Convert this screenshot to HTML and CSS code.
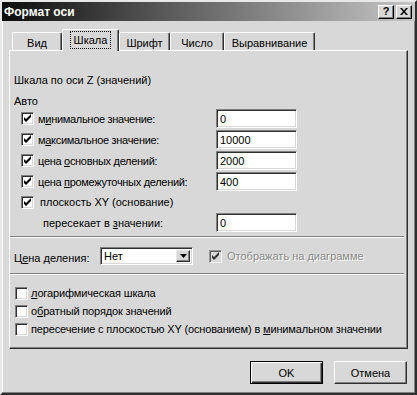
FILE: index.html
```html
<!DOCTYPE html>
<html lang="ru">
<head>
    <meta charset="UTF-8">
    <title>Формат оси</title>
    <link rel="stylesheet" href="styles.css">
</head>
<body>
    <div class="window">
        <!-- Title bar -->
        <div class="titlebar">
            <span class="title">Формат оси</span>
            <div class="caption-btns">
                <div class="cap-btn">?</div>
                <div class="cap-btn">
                    <svg width="8" height="7" viewBox="0 0 8 7"><path d="M0 0h2l2 2.5 2-2.5h2l-3 3.5 3 3.5h-2l-2-2.5-2 2.5h-2l3-3.5z" fill="#000"/></svg>
                </div>
            </div>
        </div>

        <!-- Tabs -->
        <div class="tabs">
            <div class="tab tab-vid">Вид</div>
            <div class="tab tab-scale active"><span class="focus">Шкала</span></div>
            <div class="tab tab-font">Шрифт</div>
            <div class="tab tab-num">Число</div>
            <div class="tab tab-align">Выравнивание</div>
        </div>

        <div class="panel">
            <div class="scale-title">Шкала по оси Z (значений)</div>
            <div class="auto-label">Авто</div>

            <div class="auto-rows">
                <div class="row">
                    <div class="check-label"><span class="cb checked"></span><span>м<u>и</u>нимальное значение:</span></div>
                    <div class="field">0</div>
                </div>
                <div class="row">
                    <div class="check-label"><span class="cb checked"></span><span>м<u>а</u>ксимальное значение:</span></div>
                    <div class="field">10000</div>
                </div>
                <div class="row">
                    <div class="check-label"><span class="cb checked"></span><span>цена <u>о</u>сновных делений:</span></div>
                    <div class="field">2000</div>
                </div>
                <div class="row">
                    <div class="check-label"><span class="cb checked"></span><span>цена <u>п</u>ромежуточных делений:</span></div>
                    <div class="field">400</div>
                </div>
                <div class="row row-plane">
                    <div class="check-label wide-gap"><span class="cb checked"></span><span>плоскость XY (основание)</span></div>
                </div>
                <div class="row">
                    <div class="cross-label">пересекает в <u>з</u>начении:</div>
                    <div class="field">0</div>
                </div>
            </div>

            <div class="sep"></div>

            <div class="units-row">
                <div class="units-label">Ц<u>е</u>на деления:</div>
                <div class="combo">
                    <span class="combo-text">Нет</span>
                    <span class="combo-btn">
                        <svg width="7" height="4" viewBox="0 0 7 4"><path d="M0 0h7l-3.5 4z" fill="#000"/></svg>
                    </span>
                </div>
                <div class="check-label disabled"><span class="cb checked"></span><span>Отображать на диаграмме</span></div>
            </div>

            <div class="sep"></div>

            <div class="options">
                <div class="check-label"><span class="cb"></span><span><u>л</u>огарифмическая шкала</span></div>
                <div class="check-label"><span class="cb"></span><span>о<u>б</u>ратный порядок значений</span></div>
                <div class="check-label"><span class="cb"></span><span>пересечение с плоскостью XY (основанием) в <u>м</u>инимальном значении</span></div>
            </div>
        </div>

        <div class="footer">
            <div class="btn btn-default">OK</div>
            <div class="btn">Отмена</div>
        </div>
    </div>
</body>
</html>
```

FILE: styles.css
```css
body {
    margin: 0;
    font-family: 'Liberation Sans', Arial, sans-serif;
    font-size: 11px;
    color: #000;
    background: #d8d8d8;
}

.window {
    width: 417px;
    height: 395px;
    box-sizing: border-box;
    background: #d8d8d8;
    border: 2px solid;
    border-color: #e8e8e8 #303030 #303030 #e8e8e8;
    box-shadow: inset -1px -1px #808080, inset 1px 1px #fff;
}

/* Title bar */
.titlebar {
    height: 19px;
    display: flex;
    align-items: center;
    justify-content: space-between;
    padding: 0 3px 0 2px;
    background: linear-gradient(to right, #0c0c0c, #5a5a5a 40%, #c6c6c6);
}

.title {
    color: #fff;
    font-weight: bold;
    font-size: 12px;
}

.caption-btns {
    display: flex;
    gap: 2px;
}

.cap-btn {
    width: 16px;
    height: 14px;
    box-sizing: border-box;
    display: flex;
    align-items: center;
    justify-content: center;
    background: #d8d8d8;
    border: 1px solid;
    border-color: #fff #000 #000 #fff;
    box-shadow: inset -1px -1px #808080;
    font-weight: bold;
    font-size: 11px;
    line-height: 1;
}

/* Tabs */
.tabs {
    display: flex;
    align-items: flex-end;
    height: 22px;
    margin: 8px 0 -1px 10px;
    position: relative;
    z-index: 1;
}

.tab {
    height: 18px;
    margin-bottom: 1px;
    box-sizing: border-box;
    display: flex;
    align-items: center;
    justify-content: center;
    padding-top: 2px;
    background: #d8d8d8;
    border: 1px solid;
    border-bottom: none;
    border-color: #fff #303030 transparent #fff;
    border-radius: 2px 2px 0 0;
    box-shadow: inset -1px 0 #808080;
}

.tab-vid { width: 50px; }
.tab-scale { width: 57px; }
.tab-font { width: 51px; }
.tab-num { width: 54px; }
.tab-align { width: 91px; }

.tab.active {
    height: 22px;
    margin-bottom: 0;
    padding-top: 0;
    padding-bottom: 2px;
}

.focus {
    outline: 1px dotted #000;
    outline-offset: 1px;
    padding: 1px 2px;
}

/* Panel */
.panel {
    height: 299px;
    margin: 0 7px;
    box-sizing: border-box;
    border: 1px solid;
    border-color: #fff #303030 #303030 #fff;
    box-shadow: inset -1px -1px #808080;
}

.scale-title {
    margin: 22px 0 0 4px;
    line-height: 14px;
}

.auto-label {
    margin: 8px 0 0 4px;
    line-height: 13px;
}

.auto-rows {
    padding-left: 11px;
    letter-spacing: -0.3px;
}

.row {
    display: flex;
    align-items: center;
    height: 21px;
}

.row-plane {
    height: 20px;
}

.row .check-label {
    width: 195px;
}

.check-label {
    display: flex;
    align-items: center;
    gap: 4px;
    white-space: nowrap;
}

.check-label.wide-gap {
    gap: 6px;
    letter-spacing: 0;
}

.cross-label {
    width: 173px;
    padding-left: 22px;
    letter-spacing: 0;
}

.cb {
    width: 13px;
    height: 13px;
    box-sizing: border-box;
    flex: none;
    background: #fff;
    border: 1px solid;
    border-color: #808080 #fff #fff #808080;
    box-shadow: inset 1px 1px #303030, inset -1px -1px #d8d8d8;
}

.cb.checked {
    background: #fff url("data:image/svg+xml,%3Csvg xmlns='http://www.w3.org/2000/svg' width='11' height='11'%3E%3Cpath d='M2 4v3l2 2 5-5V1L4 6z' fill='%23000'/%3E%3C/svg%3E") center / 11px 11px no-repeat;
}

.field {
    width: 81px;
    height: 19px;
    box-sizing: border-box;
    background: #fff;
    border: 1px solid;
    border-color: #808080 #fff #fff #808080;
    box-shadow: inset 1px 1px #303030, inset -1px -1px #d8d8d8;
    padding: 3px 0 0 3px;
    line-height: 13px;
    letter-spacing: 0;
}

.sep {
    height: 0;
    margin: 3px 3px 0 0;
    border-top: 1px solid #808080;
    border-bottom: 1px solid #fff;
}

/* Units row */
.units-row {
    display: flex;
    align-items: center;
    padding: 9px 0 5px 4px;
}

.units-label {
    width: 86px;
    padding-top: 4px;
}

.combo {
    width: 93px;
    height: 18px;
    box-sizing: border-box;
    display: flex;
    align-items: center;
    justify-content: space-between;
    background: #fff;
    border: 1px solid;
    border-color: #808080 #fff #fff #808080;
    box-shadow: inset 1px 1px #303030, inset -1px -1px #d8d8d8;
    padding: 2px 2px 2px 3px;
}

.combo-btn {
    width: 14px;
    height: 12px;
    box-sizing: border-box;
    display: flex;
    align-items: center;
    justify-content: center;
    background: #d8d8d8;
    border: 1px solid;
    border-color: #e8e8e8 #303030 #303030 #e8e8e8;
    box-shadow: inset -1px -1px #808080;
}

.units-row .check-label {
    margin-left: 16px;
    gap: 5px;
}

.check-label.disabled {
    color: #8a8a8a;
    text-shadow: 1px 1px #fff;
}

.check-label.disabled .cb {
    background-color: #d8d8d8;
    opacity: 0.75;
}

/* Bottom options */
.options {
    margin-top: 9px;
    padding-left: 5px;
    letter-spacing: -0.15px;
}

.options .check-label {
    height: 18px;
    gap: 3px;
}

/* Footer buttons */
.footer {
    display: flex;
    justify-content: flex-end;
    gap: 11px;
    margin: 12px 8px 0 0;
}

.btn {
    width: 73px;
    height: 23px;
    box-sizing: border-box;
    display: flex;
    align-items: center;
    justify-content: center;
    background: #d8d8d8;
    border: 1px solid;
    border-color: #fff #303030 #303030 #fff;
    box-shadow: inset -1px -1px #808080;
}

.btn-default {
    border: 1px solid #000;
    box-shadow: inset 1px 1px #fff, inset -1px -1px #303030, inset -2px -2px #808080;
}
```
